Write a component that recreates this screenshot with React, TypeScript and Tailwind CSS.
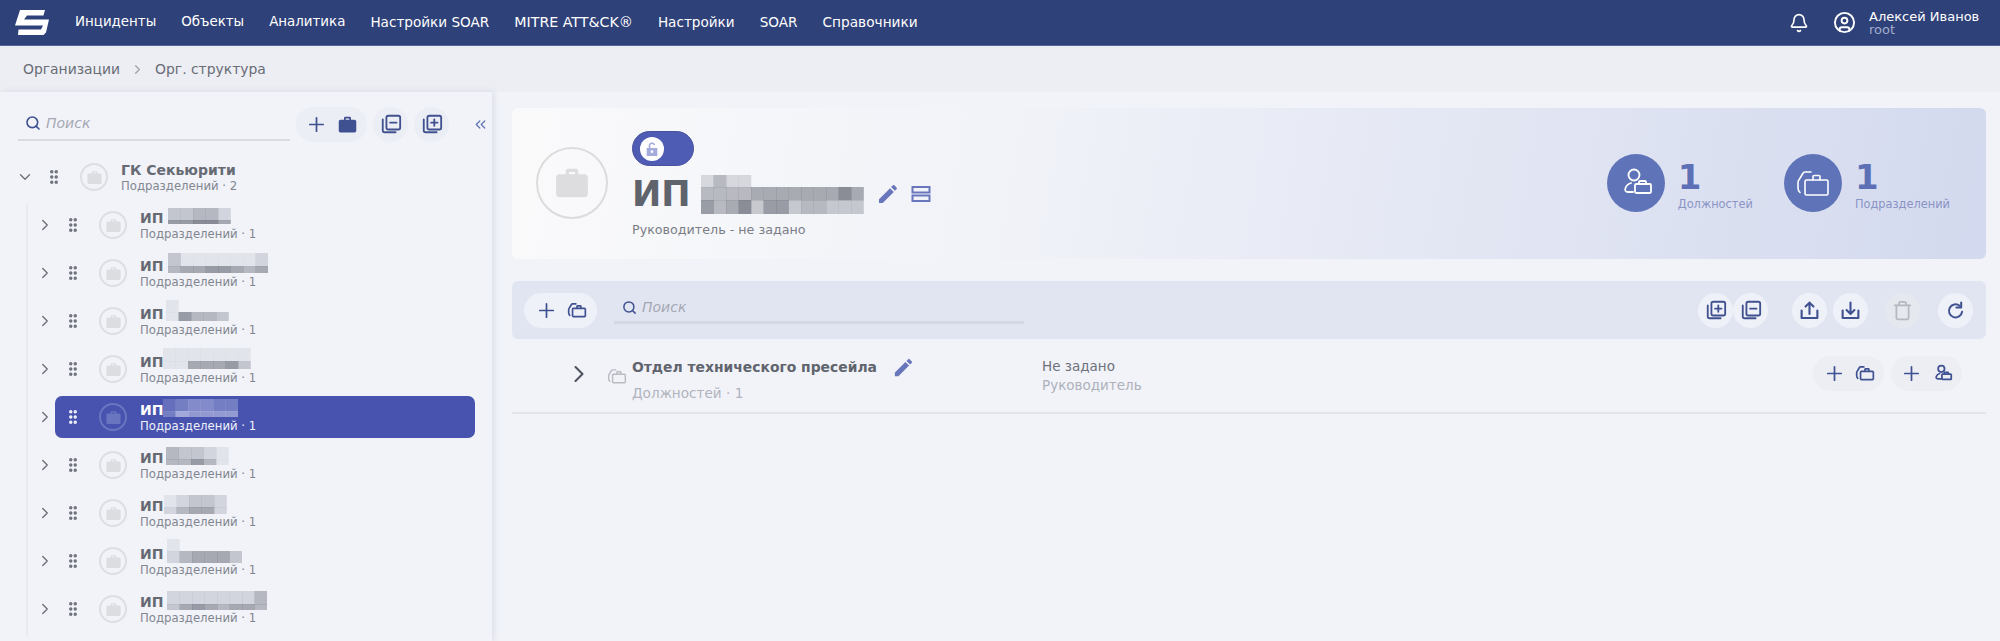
import React from "react";
import { Bell, ChevronDown, ChevronRight, ChevronsLeft, CircleUser, GripVertical, Plus, Search, Trash } from "lucide-react";

const navItems = [
  { t: "Инциденты", c: "text-[13.4px]" },
  { t: "Объекты", c: "text-[13.4px]" },
  { t: "Аналитика", c: "text-[13.4px]" },
  { t: "Настройки SOAR", c: "text-[13.6px]" },
  { t: "MITRE ATT&CK®", c: "text-[14.2px]" },
  { t: "Настройки", c: "text-[13.6px]" },
  { t: "SOAR", c: "text-[13.6px]" },
  { t: "Справочники", c: "text-[13.7px]" },
];
type Mos = { x: number; y: number; cw: number; rows: [number, string][] };

function Mosaic({ m, light }: { m: Mos; light?: boolean }) {
  let y = 0;
  const rects: React.ReactNode[] = [];
  m.rows.forEach(([h, cells], r) => {
    cells.split("").forEach((c, i) => {
      const d = Number(c);
      if (d > 0) {
        rects.push(
          <rect key={r + "-" + i} x={i * m.cw} y={y} width={m.cw + 0.3} height={h + 0.3} fill={light ? "#dfe2f6" : "#5c606c"} fillOpacity={d / 10} />
        );
      }
    });
    y += h;
  });
  const width = Math.max(...m.rows.map(([, c]) => c.length)) * m.cw;
  return (
    <svg className="absolute" style={{ left: m.x, top: m.y }} width={width} height={y}>
      {rects}
    </svg>
  );
}

function Bag({ size = 16, className = "" }: { size?: number; className?: string }) {
  return (
    <svg width={size} height={size} viewBox="0 0 24 24" className={className} fill="currentColor">
      <path d="M20 6.500h-4V4.600C16 3.700 15.300 3 14.400 3H9.600C8.700 3 8 3.700 8 4.600v1.900H4c-1.100 0-2 .9-2 2V19c0 1.100.9 2 2 2h16c1.100 0 2-.9 2-2V8.500c0-1.100-.9-2-2-2zM14 6.500h-4V5h4v1.500z" />
    </svg>
  );
}

function StackBag({ size = 20, className = "", sw = 3 }: { size?: number; className?: string; sw?: number }) {
  return (
    <svg width={size} height={size} viewBox="17 15 36 36" className={className} fill="none" stroke="currentColor" strokeWidth={sw} strokeLinejoin="round" strokeLinecap="round">
      <rect x="27" y="30" width="23" height="15" rx="1.500" />
      <path d="M35 30v-3.500a1 1 0 0 1 1-1h5a1 1 0 0 1 1 1V30" />
      <path d="M33 22h-6c-1 0-1.800.6-2.200 1.500L21.500 29c-.9 1-1.500 2-1.500 3.500V38c0 2 .8 3.500 2 4.500" />
    </svg>
  );
}

function PersonBag({ size = 20, className = "", sw = 3 }: { size?: number; className?: string; sw?: number }) {
  return (
    <svg width={size} height={size} viewBox="17 17 36 36" className={className} fill="none" stroke="currentColor" strokeWidth={sw} strokeLinejoin="round" strokeLinecap="round">
      <circle cx="33" cy="27" r="5.500" />
      <path d="M30 35C24 37 22 44 27 44H32" />
      <rect x="34" y="36" width="16" height="9" rx="1.200" />
      <path d="M38 36v-2a1 1 0 0 1 1-1h5a1 1 0 0 1 1 1v2" />
    </svg>
  );
}

function LibIcon({ plus, size = 22 }: { plus?: boolean; size?: number }) {
  return (
    <svg width={size} height={size} viewBox="0 0 24 24" fill="none" stroke="#40518f" strokeWidth="2" strokeLinecap="round" strokeLinejoin="round">
      <rect x="7" y="3" width="15" height="15" rx="2" />
      <path d="M3 7v12a2 2 0 0 0 2 2h12" />
      <path d="M11 10.500h7" />
      {plus && <path d="M14.500 7v7" />}
    </svg>
  );
}

function TransferIcon({ up }: { up?: boolean }) {
  return (
    <svg width={21} height={21} viewBox="0 0 24 24" fill="none" stroke="#3f5190" strokeWidth="2.400" strokeLinecap="round" strokeLinejoin="round">
      <path d="M3 12v8.500h18V12" />
      {up ? <path d="M12 16V3M7.500 7.500 12 3l4.500 4.500" /> : <path d="M12 3v13M7.500 11.500 12 16l4.500-4.500" />}
    </svg>
  );
}

function RefreshIcon() {
  return (
    <svg width={21} height={21} viewBox="0 0 24 24" fill="none" stroke="#3f5190" strokeWidth="2.300" strokeLinecap="round" strokeLinejoin="round">
      <path d="M19.500 13.500a7.500 7.500 0 1 1-2.800-7" />
      <path d="M18.500 3v5.500H13" />
    </svg>
  );
}

function EditIcon({ size = 22 }: { size?: number }) {
  return (
    <svg width={size} height={size} viewBox="0 0 24 24" fill="#6a76bc">
      <path d="M3 17.250V21h3.750L17.810 9.940l-3.750-3.750L3 17.250zM20.710 7.040c.39-.39.39-1.020 0-1.410l-2.340-2.340c-.39-.39-1.020-.39-1.410 0l-1.830 1.830 3.750 3.750 1.830-1.830z" />
    </svg>
  );
}

function Logo() {
  return (
    <svg width="34" height="25" viewBox="15 10 34 25" fill="#ffffff">
      <path d="M20 10H45L43.500 15.500H27L24 19.500H49L46 32.500L43.500 35H18L18.500 29.500H41L43 25.500H15Z" />
    </svg>
  );
}

function RoundBtn({ children, muted, cls = "bg-[#eff1f8]" }: { children: React.ReactNode; muted?: boolean; cls?: string }) {
  return <div className={"flex h-[35px] w-[35px] items-center justify-center rounded-full " + (muted ? "bg-[#e6e8ef]" : cls)}>{children}</div>;
}

function AddPill({ children, cls, w = "w-[72px]" }: { children: React.ReactNode; cls: string; w?: string }) {
  return (
    <div className={"flex h-[35px] items-center justify-center gap-[9px] rounded-full text-[#3f5190] " + w + " " + cls}>
      <Plus size={23} strokeWidth={1.8} />
      {children}
    </div>
  );
}

const rowsData: Mos[] = [
  { x: 28, y: -1, cw: 12.500, rows: [[12, "33442"], [4, "66775"]] },
  { x: 28, y: -4, cw: 12.500, rows: [[13, "31111112"], [7, "45566545"]] },
  { x: 26, y: -5, cw: 12.500, rows: [[12, "1"], [9, "16443"]] },
  { x: 23, y: -5, cw: 12.500, rows: [[13, "1111111"], [8, "1155563"]] },
  { x: 23, y: -2, cw: 12.500, rows: [[12, "234433"], [6, "365555"]] },
  { x: 26, y: -2, cw: 12.500, rows: [[12, "43321"], [6, "44641"]] },
  { x: 24, y: -2, cw: 12.500, rows: [[12, "12332"], [7, "24552"]] },
  { x: 27, y: -6, cw: 12.500, rows: [[12, "1"], [12, "245553"]] },
  { x: 27, y: -2, cw: 12.500, rows: [[13, "22222224"], [6, "35654554"]] },
];

function TreeRow({ name, count, m, selected }: { name: string; count: number; m?: Mos; selected?: boolean }) {
  return (
    <div className={"flex h-[42px] flex-1 items-center rounded-[7px] " + (selected ? "bg-[#4753ae]" : "")}>
      <GripVertical size={18} strokeWidth={2.600} className={"ml-[9px] shrink-0 " + (selected ? "text-[#f3f4fb]" : "text-[#6b6f7a]")} />
      <div className={"ml-[17px] flex h-[28px] w-[28px] shrink-0 items-center justify-center rounded-full border-2 " + (selected ? "border-[#6a75c0]" : "border-[#dcdee3]")}>
        <Bag size={17} className={selected ? "text-[#6a75c0]" : "text-[#dcdde1]"} />
      </div>
      <div className="relative ml-[13px] flex flex-col pt-[1px]">
        <div className={"text-[14px] leading-[16px] font-bold " + (selected ? "text-white" : "text-[#666a73]")}>{name}</div>
        <div className={"text-[11.7px] leading-[16px] " + (selected ? "text-[#f0f1fa]" : "text-[#82868f]")}>Подразделений · {count}</div>
        {m && <Mosaic m={m} light={selected} />}
      </div>
    </div>
  );
}

export default function App() {
  return (
    <div className="flex h-screen w-full flex-col overflow-hidden bg-[#f1f3f9] font-['DejaVu_Sans',sans-serif]">
      <header className="flex h-[46px] shrink-0 items-center border-b border-[#556595] bg-[#2f4179] pr-[23px] pl-[15px] text-white">
        <Logo />
        <nav className="ml-[26px] flex items-center gap-[25px]">
          {navItems.map((n) => (
            <span key={n.t} className={n.c}>{n.t}</span>
          ))}
        </nav>
        <div className="ml-auto flex items-center">
          <Bell size={20} strokeWidth={2} className="mr-[24px]" />
          <CircleUser size={23} strokeWidth={2} className="mr-[13px]" />
          <div className="flex w-[108px] flex-col whitespace-nowrap">
            <span className="text-[13px] leading-[13px]">Алексей Иванов</span>
            <span className="text-[13px] leading-[13px] text-[#a1adce]">root</span>
          </div>
        </div>
      </header>

      <div className="flex h-[46px] shrink-0 items-center bg-[#eceef4] pl-[23px] text-[13.9px] text-[#696c75]">
        <span>Организации</span>
        <ChevronRight size={15} className="mx-[10px] text-[#a0a3ab]" />
        <span>Орг. структура</span>
      </div>

      <div className="flex min-h-0 flex-1">
        <aside className="flex w-[492px] shrink-0 flex-col bg-[#f1f3f9] shadow-[2px_0_6px_rgba(120,125,150,0.18)]">
          <div className="flex h-[64px] shrink-0 items-center pl-[18px]">
            <div className="flex h-[33px] w-[272px] items-center gap-[5px] border-b-[2px] border-[#d9dbe3] pl-[7px]">
              <Search size={16} strokeWidth={2.400} className="text-[#3f5190]" />
              <span className="text-[14px] text-[#a5a8b3] italic">Поиск</span>
            </div>
            <AddPill cls="bg-[#eceef5] ml-[6px]" w="w-[71px]">
              <Bag size={21} className="text-[#3f5190]" />
            </AddPill>
            <div className="ml-[6px] flex gap-[6px]">
              <RoundBtn cls="bg-[#eceef5]"><LibIcon /></RoundBtn>
              <RoundBtn cls="bg-[#eceef5]"><LibIcon plus /></RoundBtn>
            </div>
            <ChevronsLeft size={17} strokeWidth={1.800} className="ml-[23px] text-[#6376b5]" />
          </div>

          <div className="flex items-center pl-[16px]">
            <ChevronDown size={18} strokeWidth={1.800} className="shrink-0 text-[#6b6f7a]" />
            <div className="flex flex-1 pr-[17px] pl-[2px]">
              <TreeRow name="ГК Секьюрити" count={2} />
            </div>
          </div>

          <div className="mt-[6px] ml-[26px] flex flex-col gap-[6px] border-l-2 border-[#e8eaf0] pb-[6px]">
            {rowsData.map((m, i) => (
              <div key={i} className="flex items-center pl-[8px]">
                <ChevronRight size={18} strokeWidth={1.800} className="shrink-0 text-[#6b6f7a]" />
                <div className="flex flex-1 pr-[17px] pl-[1px]">
                  <TreeRow name="ИП" count={1} m={m} selected={i === 4} />
                </div>
              </div>
            ))}
          </div>
        </aside>

        <main className="flex min-w-0 flex-1 flex-col pt-[16px] pr-[14px] pl-[20px]">
          <section className="flex h-[151px] shrink-0 items-start rounded-[6px] bg-[linear-gradient(100deg,#fafafb,#f0f2f8_35%,#d3d9ee)] pr-[36px] pl-[24px]">
            <div className="mt-[39px] flex h-[72px] w-[72px] items-center justify-center rounded-full border-2 border-[#dcdcdd]">
              <Bag size={38} className="text-[#dddddf]" />
            </div>
            <div className="mt-[23px] ml-[24px] flex flex-col">
              <div className="flex h-[35px] w-[62px] items-center rounded-full border border-[#46519f] bg-[#4f5cb3] pl-[7px]">
                <div className="flex h-[24px] w-[24px] items-center justify-center rounded-full bg-white">
                  <svg width="16" height="16" viewBox="0 0 24 24" fill="#a5abdb">
                    <path d="M4 10.500h16v12H4zM7 10.500V7a5 5 0 0 1 9.800-1.300l-2.400.6A2.500 2.500 0 0 0 9.500 7v3.500z" />
                    <circle cx="12" cy="16" r="2" fill="#ffffff" />
                  </svg>
                </div>
              </div>
              <div className="relative mt-[6px] flex h-[44px] items-center">
                <span className="w-[56px] text-[35px] leading-none font-bold text-[#5f636c]">ИП</span>
                <div className="ml-[188px] flex items-center gap-[11px]">
                  <EditIcon size={24} />
                  <svg width="20" height="20" viewBox="0 0 20 20" fill="none" stroke="#6a76bc" strokeWidth="2">
                    <rect x="1.500" y="3" width="17" height="5.500" />
                    <rect x="1.500" y="11.500" width="17" height="5.500" />
                  </svg>
                </div>
                <Mosaic m={{ x: 69, y: 3, cw: 12.500, rows: [[12, "2422"], [13, "4444555555575"], [14, "6457366344333"]] }} />
              </div>
              <span className="mt-[6px] text-[12.700px] leading-[15px] text-[#7a7d86]">Руководитель - не задано</span>
            </div>
            <div className="mt-[46px] ml-auto flex items-center">
              <Stat label="Должностей" icon={<PersonBag size={36} sw={1.800} />} />
              <div className="w-[31px]" />
              <Stat label="Подразделений" icon={<StackBag size={36} sw={1.600} />} />
            </div>
          </section>

          <section className="mt-[22px] flex h-[58px] shrink-0 items-center rounded-[6px] bg-[#e1e5f2] pr-[13px] pl-[12px]">
            <AddPill cls="bg-[#eff1f8]" w="w-[73px]">
              <StackBag size={20} />
            </AddPill>
            <div className="-mt-[2px] ml-[17px] flex h-[30px] w-[410px] items-center gap-[5px] border-b-[3px] border-[#d4d8e6] pl-[8px]">
              <Search size={15} strokeWidth={2.400} className="text-[#3f5190]" />
              <span className="text-[14px] text-[#a5a8b3] italic">Поиск</span>
            </div>
            <div className="ml-auto flex items-center">
              <RoundBtn><LibIcon plus /></RoundBtn>
              <RoundBtn><LibIcon /></RoundBtn>
              <div className="w-[24px]" />
              <RoundBtn><TransferIcon up /></RoundBtn>
              <div className="w-[6px]" />
              <RoundBtn><TransferIcon /></RoundBtn>
              <div className="w-[17px]" />
              <RoundBtn muted><Trash size={21} strokeWidth={2} className="text-[#b6b8c0]" /></RoundBtn>
              <div className="w-[18px]" />
              <RoundBtn><RefreshIcon /></RoundBtn>
            </div>
          </section>

          <section className="flex h-[75px] shrink-0 items-center border-b-2 border-[#e2e4ea]">
            <ChevronRight size={28} strokeWidth={1.800} className="-mt-[3px] ml-[53px] shrink-0 text-[#4e525c]" />
            <StackBag size={20} sw={2.600} className="ml-[14px] shrink-0 text-[#b9bbc3]" />
            <div className="ml-[5px] flex w-[410px] flex-col pt-[9px]">
              <div className="flex items-center gap-[15px]">
                <span className="text-[13.9px] font-bold text-[#60646d]">Отдел технического пресейла</span>
                <EditIcon size={23} />
              </div>
              <span className="mt-[4px] text-[13.600px] text-[#b0b3bd]">Должностей · 1</span>
            </div>
            <div className="flex flex-col text-[13.500px] leading-[19px]">
              <span className="text-[#6e717a]">Не задано</span>
              <span className="text-[#aeb1bb]">Руководитель</span>
            </div>
            <div className="mt-[-5px] mr-[24px] ml-auto flex items-center gap-[7px]">
              <AddPill cls="bg-[#eceef4]" w="w-[71px]"><StackBag size={20} /></AddPill>
              <AddPill cls="bg-[#eceef4]" w="w-[71px]"><PersonBag size={21} /></AddPill>
            </div>
          </section>
        </main>
      </div>
    </div>
  );
}

function Stat({ label, icon }: { label: string; icon: React.ReactNode }) {
  return (
    <div className="flex items-center">
      <div className="flex h-[58px] w-[58px] shrink-0 items-center justify-center rounded-full bg-[#5f73b8] text-white">{icon}</div>
      <div className="ml-[13px] flex flex-col pt-[6px]">
        <span className="text-[34px] leading-[34px] font-bold text-[#5d70b5]">1</span>
        <span className="mt-[2px] text-[11.400px] leading-[16px] text-[#8a94c5]">{label}</span>
      </div>
    </div>
  );
}
